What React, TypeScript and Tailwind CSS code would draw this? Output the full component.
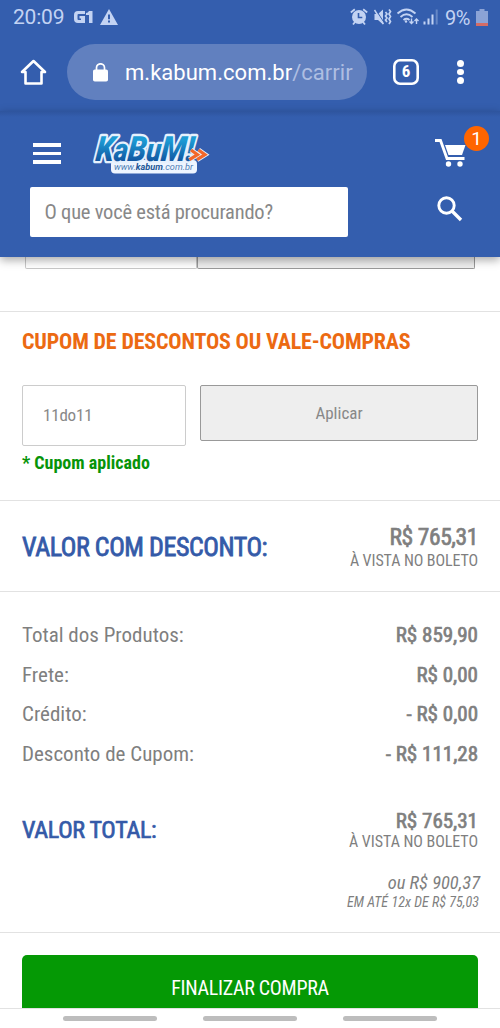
import { ReactNode } from 'react';
import clsx from 'clsx';

function StatusBar() {
  return (
    <div className="flex h-[34px] items-center pr-3 pl-[13px] text-[#c3d3f3]">
      <span className="mt-px w-[61px] text-[21px] tracking-[-0.2px]">20:09</span>
      <svg className="h-3 w-[19px]" viewBox="0 0 19 12" fill="currentColor">
        <path d="M4 0h7v3H4.500q-1 0-1 1v4q0 1 1 1H7V7.500H5.500V5H11v7H4q-4 0-4-4V4q0-4 4-4Z" />
        <path d="M12 2q2 0 3-2h3.500v12H15V4h-3Z" />
      </svg>
      <svg className="ml-[7px] h-4 w-[18px]" viewBox="0 0 18 16">
        <path d="M9 0 18 16H0Z" fill="currentColor" />
        <path d="M8 5.500h2v4.700H8Zm0 6h2v2H8Z" fill="#345eae" />
      </svg>
      <svg
        className="ml-auto h-[18px] w-[88px]"
        viewBox="349 8 88 18"
        fill="none"
        stroke="currentColor"
        strokeWidth={1.8}
      >
        {/* Alarm */}
        <circle cx="358" cy="17" r="7" fill="currentColor" stroke="none" />
        <path d="m349.800 12.500 4-3.300m12.400 3.300-4-3.300M354 22l-2 2.500m10-2.500 2 2.500" />
        <path d="M357.500 13v4.500h3.800" stroke="#345eae" strokeWidth={1.6} />
        {/* Muted with vibration */}
        <path
          d="M373.500 14h3.500l5-4.500v15l-5-4.500h-3.500Z"
          fill="currentColor"
          stroke="none"
        />
        <path d="m374.500 9.500 9 14" stroke="#345eae" strokeWidth={1.2} />
        <path d="m373.500 10 9 14" strokeWidth={1.4} />
        <path
          d="m384.500 12 1.500 2-1.500 2 1.500 2-1.500 2 1.500 2M388 9.500l1.500 2-1.500 2.500 1.500 2.500-1.500 2.500 1.500 2.500-1.500 2.500"
          strokeWidth={1.7}
        />
        {/* Wi-Fi */}
        <path d="M396.500 13.500q9-8 18 0M399.500 17q6-5.500 12 0M402.500 20q3-2.500 6 0" />
        <circle cx="405" cy="21.500" r="1.200" fill="currentColor" stroke="none" />
        <path
          d="M410.500 18.500v5m-2-2 2 2 2-2m3 2.500v-5m-2 2 2-2 2 2"
          strokeWidth={1.4}
        />
        {/* Signal */}
        <path d="M423.500 24.500v-3m4 3v-6m4 6v-10" strokeWidth={2} />
        <path d="M435.700 24.500V9.500" strokeWidth={2} opacity={0.35} />
      </svg>
      <span className="mt-px ml-[7px] w-[28px] text-[20px] tracking-[-0.5px] whitespace-nowrap">
        9%
      </span>
      <svg className="ml-[3px] h-[17px] w-3" viewBox="0 0 12 17">
        <path d="M3.500 0h5v2H12v12H0V2h3.500Z" fill="#8ba3d6" />
        <path d="M0 14h12v3H0Z" fill="#d56c66" />
      </svg>
    </div>
  );
}

function BrowserBar() {
  return (
    <div className="flex h-[77px] items-center pl-5 pb-px">
      <svg
        className="h-[26px] w-[27px]"
        viewBox="0 0 27 26"
        fill="none"
        stroke="white"
        strokeWidth={2.6}
        strokeLinejoin="round"
      >
        <path d="M2 13 13.500 2 25 13h-3.500v11.500h-16V13Z" />
      </svg>
      <div className="ml-5 flex h-14 w-[300px] items-center rounded-full bg-[#6180bf] pl-[26px]">
        <svg className="h-[19px] w-[15px]" viewBox="0 0 15 19">
          <rect y="6.500" width="15" height="12" rx="1.800" fill="white" />
          <path
            d="M3.500 8V4.800a4 4 0 0 1 8 0V8"
            fill="none"
            stroke="white"
            strokeWidth={1.7}
          />
        </svg>
        <span className="mt-px ml-[17px] text-[22px] tracking-[0.03px] whitespace-nowrap text-white">
          m.kabum.com.br<span className="text-[#aebee2]">/carrir</span>
        </span>
      </div>
      <div className="ml-[26px] flex h-[26px] w-[26px] items-center justify-center rounded-[7px] text-[17px] text-white shadow-[inset_0_0_0_2.6px_white]">
        <Condensed className="font-bold">6</Condensed>
      </div>
      <div className="ml-[38px] flex flex-col gap-[2px]">
        <i className="h-[6.5px] w-[6.5px] rounded-full bg-white" />
        <i className="h-[6.5px] w-[6.5px] rounded-full bg-white" />
        <i className="h-[6.5px] w-[6.5px] rounded-full bg-white" />
      </div>
    </div>
  );
}

function Logo() {
  return (
    <svg
      className="h-[42px] w-[118px] overflow-visible"
      viewBox="92 131 118 42"
      fontFamily="Roboto, sans-serif"
      fontStyle="italic"
    >
      <defs>
        <linearGradient id="kabum" x1="0" y1="0" x2="0" y2="1">
          <stop offset="0.3" stopColor="#1c9bd4" />
          <stop offset="0.85" stopColor="#12509c" />
        </linearGradient>
      </defs>
      <rect x="111" y="160" width="86" height="13.500" rx="4" fill="#eef5ff" />
      <text
        transform="translate(95 160.500) skewX(-6)"
        fontSize="35"
        fontWeight="900"
        textLength="98"
        lengthAdjust="spacingAndGlyphs"
        stroke="#e6f1fd"
        strokeWidth={4.6}
        strokeLinejoin="round"
        paintOrder="stroke"
        fill="url(#kabum)"
      >
        K<tspan fontSize="32">a</tspan>B<tspan fontSize="32">u</tspan>M!
      </text>
      <path
        d="m191 150 6.500 4.700-8 5M198.500 150l6.500 4.700-8 5"
        fill="none"
        stroke="#e6f1fd"
        strokeWidth={5}
      />
      <path
        d="m191 150 6.500 4.700-8 5M198.500 150l6.500 4.700-8 5"
        fill="none"
        stroke="#f2672a"
        strokeWidth={3.2}
      />
      <text
        x="114"
        y="170"
        fontSize="9.500"
        fill="#4f7fb5"
        textLength="79"
        lengthAdjust="spacingAndGlyphs"
      >
        www.
        <tspan fontWeight="700" fill="#1d5796">
          kabum
        </tspan>
        .com.br
      </text>
    </svg>
  );
}

function SiteHeader() {
  return (
    <header className="relative h-[146px] bg-[#345eae] bg-linear-to-b from-[#2e549d] to-[#345eae] to-[6px] shadow-[0_3px_9px_rgba(0,0,0,0.35)]">
      <div className="flex h-[76px] items-start pl-[33px]">
        <div className="mt-[32px] flex w-[28px] flex-col gap-[5px]">
          <i className="h-[3.5px] bg-white" />
          <i className="h-[3.5px] bg-white" />
          <i className="h-[3.5px] bg-white" />
        </div>
        <div className="mt-5 ml-[31px]">
          <Logo />
        </div>
        <div className="relative mt-[27px] ml-[225px]">
          <svg className="h-[29px] w-[31px]" viewBox="0 0 31 29" fill="white">
            <path
              d="M0 2.500h5.500L12 20.500h17.500"
              fill="none"
              stroke="white"
              strokeWidth={2.8}
            />
            <path d="M10 7h20.500l-3.500 10H13.500Z" />
            <circle cx="13.500" cy="26" r="2.700" />
            <circle cx="25" cy="26" r="2.700" />
          </svg>
          <span className="absolute -top-[12px] left-[29px] flex h-[25px] w-[25px] items-center justify-center rounded-full bg-[#ff6500] pt-px text-[19px] text-white">
            1
          </span>
        </div>
      </div>
      <div className="flex items-start pl-[30px]">
        <div className="flex h-[50px] w-[318px] items-center rounded-[2px] bg-white pl-[14.5px] text-[20.5px] tracking-[-0.22px] text-[#888]">
          <Condensed>O que você está procurando?</Condensed>
        </div>
        <svg
          className="mt-[9px] ml-[89px] h-[26px] w-[26px]"
          viewBox="0 0 26 26"
          fill="none"
          stroke="white"
          strokeWidth={2.9}
        >
          <circle cx="9.500" cy="9.500" r="7.700" />
          <path d="m15 15 9 9" strokeWidth={3.4} />
        </svg>
      </div>
    </header>
  );
}

function Condensed({
  children,
  className
}: {
  children: ReactNode;
  className?: string;
}) {
  return (
    <span
      className={clsx(
        "inline-block font-['Roboto_Condensed',Roboto,sans-serif] whitespace-nowrap [font-stretch:75%]",
        className
      )}
    >
      {children}
    </span>
  );
}

function Row({ label, value }: { label: string; value: string }) {
  return (
    <div className="flex h-[39.7px] items-center justify-between text-[21px]">
      <Condensed>{label}</Condensed>
      <Condensed className="[-webkit-text-stroke:0.7px]">{value}</Condensed>
    </div>
  );
}

export default function App() {
  return (
    <div className="flex h-[1028px] w-[500px] flex-col overflow-hidden bg-white font-[Roboto,sans-serif] text-[#7f7f7f]">
      <div className="bg-[#345eae]">
        <StatusBar />
        <BrowserBar />
      </div>
      <SiteHeader />
      <main className="h-[751px] shrink-0 overflow-hidden">
        <div className="flex h-[55px] border-b border-[#e2e2e2] pl-[25px]">
          <div className="h-[12px] w-[172px] rounded-b-[2px] border border-t-0 border-[#c8c8c8]" />
          <div className="h-[12px] w-[278px] rounded-b-[2px] border border-t-0 border-[#999] bg-[#eee]" />
        </div>
        <section className="h-[189px] border-b border-[#e2e2e2] px-[22px] pt-[14px]">
          <h2 className="h-[59px] text-[22px] leading-[32px] font-bold tracking-[-0.17px] text-[#ec6a12]">
            <Condensed>CUPOM DE DESCONTOS OU VALE-COMPRAS</Condensed>
          </h2>
          <div className="flex items-start gap-[14px] text-[17px] text-[#888]">
            <div className="flex h-[61px] w-[164px] items-center rounded-[2px] border border-[#ccc] pl-5 tracking-[-0.2px]">
              <Condensed className="mt-px">11do11</Condensed>
            </div>
            <button className="h-14 w-[278px] rounded-[2px] border border-[#999] bg-[#eee]">
              <Condensed className="mt-px">Aplicar</Condensed>
            </button>
          </div>
          <p className="mt-[3px] text-[18px] font-bold text-[#079409]">
            <Condensed>* Cupom aplicado</Condensed>
          </p>
        </section>
        <section className="flex h-[91px] items-center justify-between border-b border-[#e2e2e2] px-[22px]">
          <h2 className="mt-[2px] text-[26px] tracking-[-0.45px] text-[#345aa8] [-webkit-text-stroke:0.8px]">
            <Condensed>VALOR COM DESCONTO:</Condensed>
          </h2>
          <div className="mt-[4px] flex flex-col items-end">
            <Condensed className="text-[23.5px] leading-[25px] tracking-[-0.4px] [-webkit-text-stroke:0.7px]">
              R$ 765,31
            </Condensed>
            <Condensed className="text-[16px] leading-[22px] tracking-[-0.1px]">
              À VISTA NO BOLETO
            </Condensed>
          </div>
        </section>
        <section className="h-[341px] border-b border-[#e2e2e2] px-[22px] pt-[24px]">
          <Row label="Total dos Produtos:" value="R$ 859,90" />
          <Row label="Frete:" value="R$ 0,00" />
          <Row label="Crédito:" value="- R$ 0,00" />
          <Row label="Desconto de Cupom:" value="- R$ 111,28" />
          <div className="mt-[31.5px] flex h-[48px] items-center justify-between">
            <h2 className="text-[24px] tracking-[-0.3px] text-[#345aa8] [-webkit-text-stroke:0.7px]">
              <Condensed>VALOR TOTAL:</Condensed>
            </h2>
            <div className="flex flex-col items-end">
              <Condensed className="text-[21px] leading-[22px] [-webkit-text-stroke:0.7px]">
                R$ 765,31
              </Condensed>
              <Condensed className="text-[16px] leading-[19px] tracking-[-0.05px]">
                À VISTA NO BOLETO
              </Condensed>
            </div>
          </div>
          <div className="-mr-[2px] mt-[18.5px] flex flex-col items-end italic">
            <Condensed className="text-[18.5px] leading-[20px]">
              ou R$ 900,37
            </Condensed>
            <Condensed className="mr-px text-[14px] leading-[18px] tracking-[0.05px]">
              EM ATÉ 12x DE R$ 75,03
            </Condensed>
          </div>
        </section>
        <div className="px-[22px] pt-[22px]">
          <button className="h-[66px] w-full rounded-[5px] bg-[#059905] text-[20px] tracking-[-0.3px] text-white">
            <Condensed>FINALIZAR COMPRA</Condensed>
          </button>
        </div>
      </main>
      <nav className="flex h-5 gap-[46px] border-t border-[#e2e2e2] bg-white pt-[7px] pl-[63px]">
        <i className="h-[5px] w-[94px] rounded-full bg-[#bdbdbd]" />
        <i className="h-[5px] w-[94px] rounded-full bg-[#bdbdbd]" />
        <i className="h-[5px] w-[94px] rounded-full bg-[#bdbdbd]" />
      </nav>
    </div>
  );
}
